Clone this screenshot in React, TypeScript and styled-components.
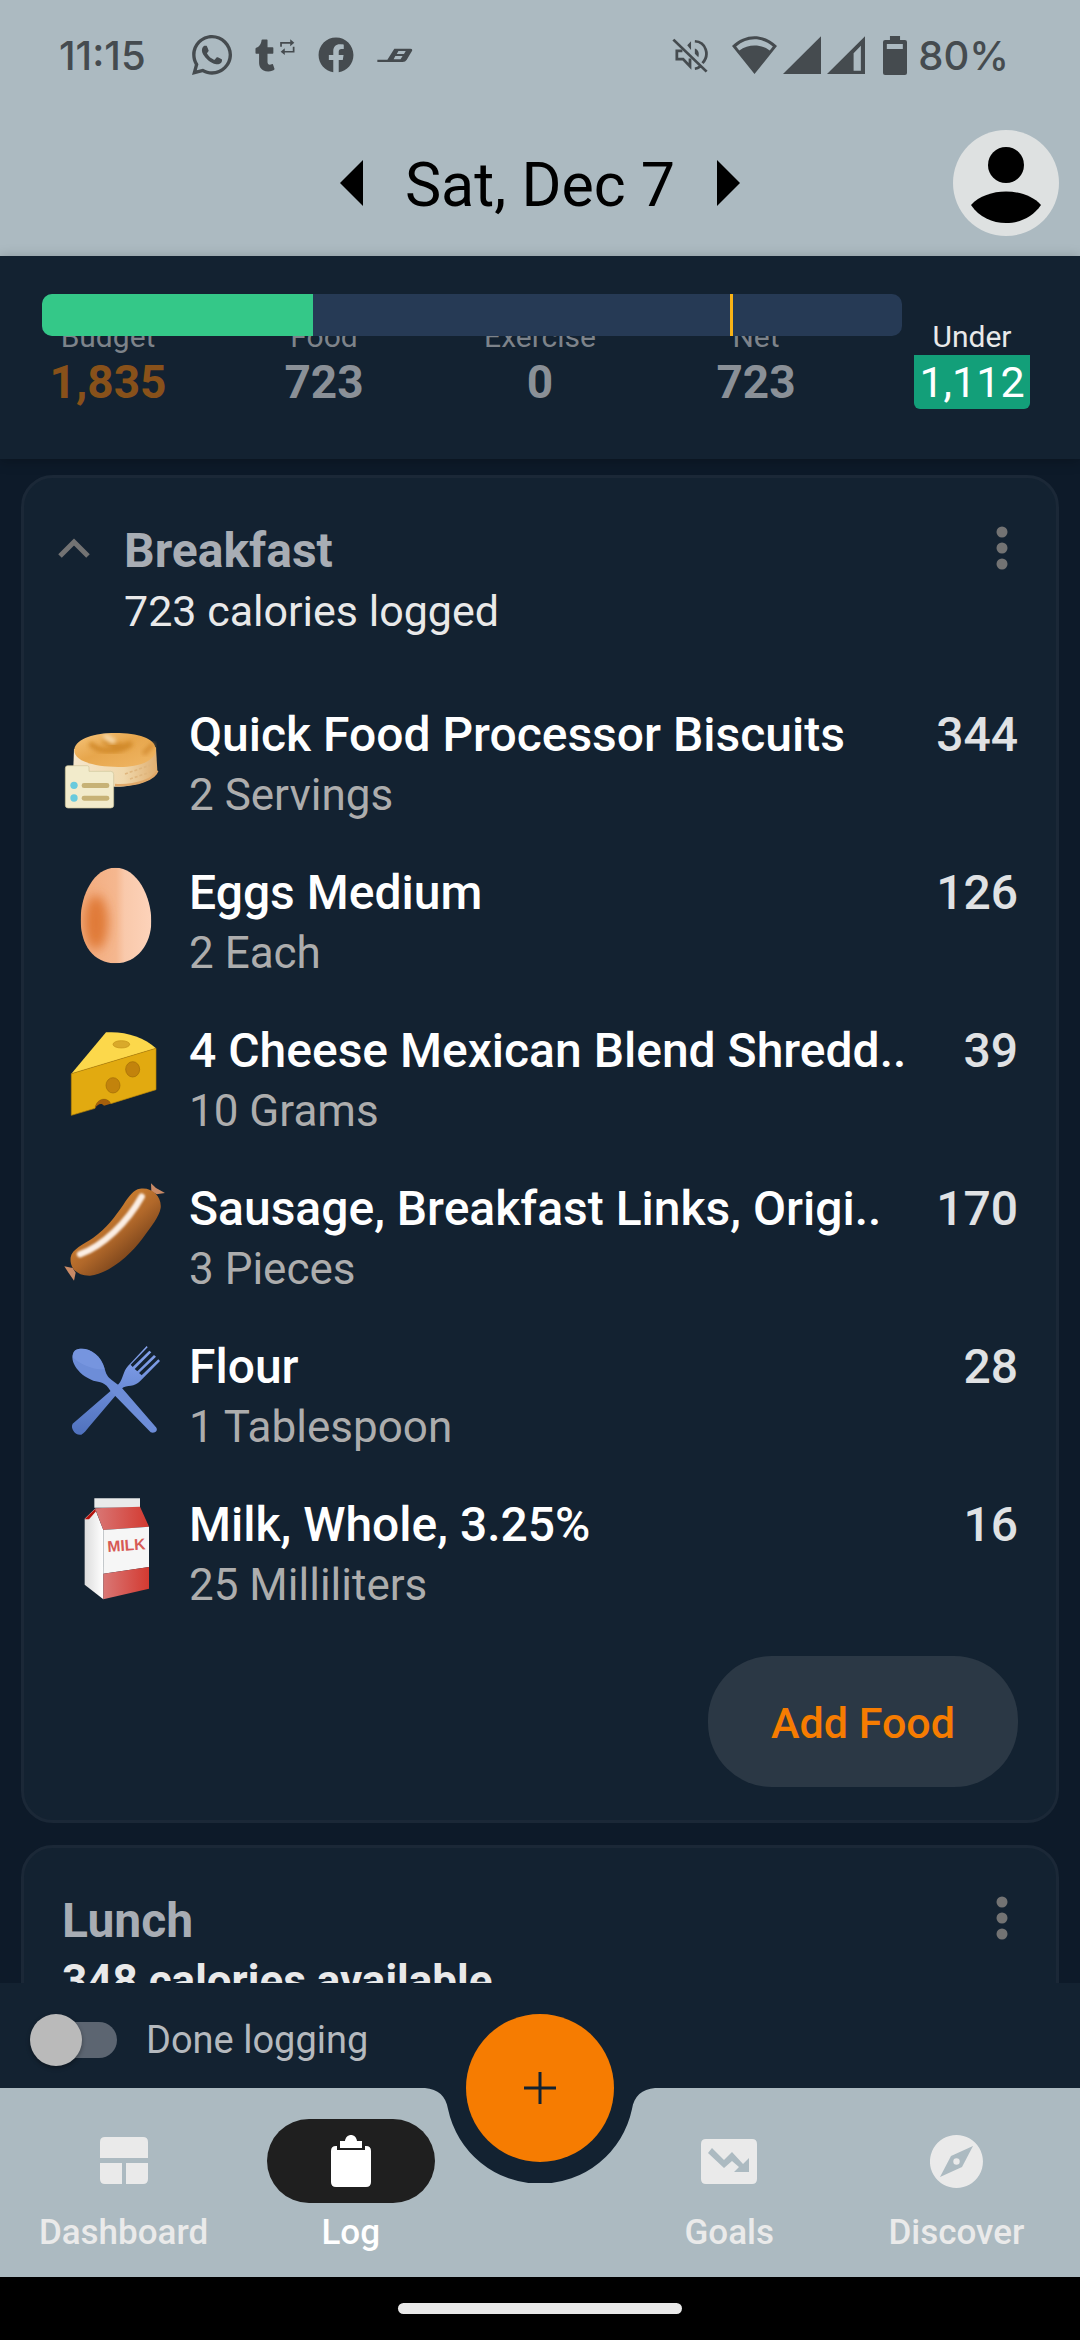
import React, { useState } from "react";
import styled, { createGlobalStyle } from "styled-components";
import { FaWhatsapp, FaTumblr, FaFacebook } from "react-icons/fa";

const color = {
  chrome: "#acbac1",
  page: "#0d1a29",
  panel: "#132231",
  line: "#1b2837",
  status: "#454b4f",
  accent: "#f67c01",
  white: "#ffffff",
  soft: "#e9e9e9",
  muted: "#adadad",
  title: "#a8adb4",
};

const GlobalStyle = createGlobalStyle`
  * { box-sizing: border-box; }
  body { margin: 0; background: ${color.page}; font-family: Roboto, "Liberation Sans", sans-serif; }
  button { border: 0; padding: 0; background: none; font: inherit; color: inherit; cursor: pointer; }
  h1, h2, p, ul, dl, dt, dd { margin: 0; padding: 0; font-weight: inherit; }
  svg { display: block; flex: none; }
`;

const Screen = styled.div`
  display: flex;
  flex-direction: column;
  height: 100vh;
  overflow: hidden;
`;

/* ---------- status bar ---------- */
const StatusBar = styled.div`
  display: flex;
  justify-content: space-between;
  align-items: center;
  height: 110px;
  padding: 0 71px 0 59px;
  background: ${color.chrome};
  color: ${color.status};
  font-family: Inter, Roboto, sans-serif;
  font-size: 40px;
  font-weight: 500;
  flex: none;
`;
const Cluster = styled.div<{ $gap: number }>`
  display: flex;
  align-items: center;
  gap: ${(p) => p.$gap}px;
`;
const Reblog = styled.div`
  display: flex;
  align-items: flex-start;
  gap: 5px;
`;

/* ---------- header ---------- */
const Header = styled.header`
  display: grid;
  grid-template-columns: 1fr auto 1fr;
  align-items: center;
  height: 146px;
  padding: 0 21px;
  background: ${color.chrome};
  color: #000;
  flex: none;
`;
const DatePicker = styled.div`
  grid-column: 2;
  display: flex;
  align-items: center;
  gap: 42px;
`;
const DateTitle = styled.h1`
  padding-top: 4px;
  font-size: 61px;
  line-height: 72px;
  font-weight: 400;
`;
const Avatar = styled.button`
  grid-column: 3;
  justify-self: end;
  width: 106px;
  height: 106px;
  border-radius: 50%;
  background: #dee1e1;
`;

/* ---------- summary ---------- */
const Summary = styled.section`
  position: relative;
  z-index: 1;
  padding: 63px 0 50px;
  background: ${color.panel};
  box-shadow: 0 2px 12px rgba(0, 0, 0, 0.25);
  flex: none;
`;
const Stats = styled.dl`
  display: grid;
  grid-template-columns: repeat(5, 1fr);
`;
const Stat = styled.div`
  display: flex;
  flex-direction: column;
  align-items: center;
`;
const StatLabel = styled.dt<{ $bright?: boolean }>`
  font-size: 30px;
  line-height: 36px;
  color: ${(p) => (p.$bright ? color.soft : "#7d838a")};
`;
const StatValue = styled.dd<{ $tone: string }>`
  font-size: 46px;
  line-height: 54px;
  font-weight: 700;
  color: ${(p) => p.$tone};
`;
const Remaining = styled.dd`
  padding: 0 5px;
  border-radius: 0 0 6px 6px;
  background: #139f79;
  color: ${color.white};
  font-size: 43px;
  line-height: 54px;
`;
const Meter = styled.div`
  position: absolute;
  top: 38px;
  left: 42px;
  right: 178px;
  height: 42px;
  border-radius: 10px;
  background: #263a55;
  overflow: hidden;
`;
const MeterFill = styled.div`
  height: 100%;
  background: #34c888;
`;
const MeterMark = styled.div`
  position: absolute;
  top: 0;
  width: 3px;
  height: 100%;
  background: #f9b316;
`;

/* ---------- meals ---------- */
const Meals = styled.main`
  flex: 1;
  min-height: 0;
  overflow: hidden;
  display: flex;
  flex-direction: column;
  gap: 22px;
  padding: 16px 21px 0;
  background: ${color.page};
`;
const Card = styled.section`
  flex: none;
  padding: 42px 38px 33px 36px;
  border: 3px solid ${color.line};
  border-radius: 32px;
  background: ${color.panel};
`;
const CardHeader = styled.div`
  display: flex;
  align-items: flex-start;
  padding-left: 2px;
`;
const IconButton = styled.button<{ $toggle?: boolean }>`
  display: flex;
  align-items: center;
  justify-content: center;
  width: 32px;
  height: 56px;
  margin: ${(p) => (p.$toggle ? "0 34px 0 -4px" : "0 0 0 auto")};
`;
const MealTitle = styled.h2`
  font-size: 48px;
  line-height: 62px;
  font-weight: 700;
  color: ${color.title};
`;
const MealNote = styled.p<{ $strong?: boolean }>`
  font-size: ${(p) => (p.$strong ? 44 : 43)}px;
  line-height: 58px;
  font-weight: ${(p) => (p.$strong ? 700 : 400)};
  color: ${color.soft};
`;
const FoodList = styled.ul`
  display: flex;
  flex-direction: column;
  gap: 38px;
  margin-top: 64px;
  list-style: none;
`;
const FoodRow = styled.li`
  display: flex;
  align-items: flex-start;
  gap: 21px;
`;
const FoodText = styled.div`
  flex: 1;
  min-width: 0;
`;
const FoodName = styled.p`
  font-size: 48px;
  line-height: 62px;
  font-weight: 500;
  color: ${color.white};
  white-space: nowrap;
`;
const FoodAmount = styled.p`
  font-size: 44px;
  line-height: 58px;
  color: ${color.muted};
`;
const FoodCalories = styled.span`
  font-size: 48px;
  line-height: 62px;
  font-weight: 500;
  color: #e0e2e4;
`;
const CardActions = styled.div`
  display: flex;
  justify-content: flex-end;
  margin-top: 42px;
`;
const AddFood = styled.button`
  min-width: 310px;
  height: 131px;
  padding: 3px 60px 0;
  border-radius: 64px;
  background: #2b3845;
  color: ${color.accent};
  font-size: 43px;
  font-weight: 500;
`;

/* ---------- footer ---------- */
const DoneBar = styled.label`
  display: flex;
  align-items: center;
  gap: 29px;
  height: 105px;
  padding: 8px 30px 0;
  background: ${color.panel};
  color: #b5b9be;
  font-size: 38px;
  flex: none;
`;
const Switch = styled.input`
  appearance: none;
  display: grid;
  align-items: center;
  width: 87px;
  height: 52px;
  margin: 0;
  &::before,
  &::after {
    content: "";
    grid-area: 1 / 1;
  }
  &::before {
    height: 36px;
    margin-left: 16px;
    border-radius: 18px;
    background: #5c6571;
  }
  &::after {
    width: 52px;
    height: 52px;
    border-radius: 50%;
    background: #bababa;
    box-shadow: 0 2px 4px rgba(0, 0, 0, 0.35);
  }
  &:checked::after {
    justify-self: end;
  }
`;
const Nav = styled.nav`
  position: relative;
  display: grid;
  grid-template-columns: 3fr 3fr 2fr 3fr 3fr;
  align-items: start;
  height: 189px;
  padding: 31px 10px 0;
  background: ${color.chrome};
  flex: none;
`;
const Cradle = styled.svg`
  position: absolute;
  top: 0;
  left: calc(50% - 120px);
`;
const Fab = styled.button`
  position: absolute;
  top: -74px;
  left: calc(50% - 74px);
  display: grid;
  place-items: center;
  width: 148px;
  height: 148px;
  border-radius: 50%;
  background: ${color.accent};
`;
const NavItem = styled.a<{ $active?: boolean; $after?: boolean }>`
  display: flex;
  flex-direction: column;
  align-items: center;
  gap: 10px;
  ${(p) => (p.$after ? "grid-column: 4;" : "")}
  color: ${(p) => (p.$active ? color.white : "#eaeaea")};
  font-size: 35px;
  line-height: 40px;
  font-weight: 500;
  text-decoration: none;
`;
const NavPill = styled.span<{ $active?: boolean }>`
  display: grid;
  place-items: center;
  width: 168px;
  height: 84px;
  border-radius: 42px;
  background: ${(p) => (p.$active ? "#1f1f1f" : "transparent")};
`;
const SystemBar = styled.div`
  display: flex;
  justify-content: center;
  height: 63px;
  padding-top: 26px;
  background: #000;
  flex: none;
`;
const HomeHandle = styled.div`
  width: 284px;
  height: 11px;
  border-radius: 6px;
  background: ${color.soft};
`;

/* ---------- drawings ---------- */
const Glyph = ({ w, h, box, children }: { w: number; h: number; box: string; children: React.ReactNode }) => (
  <svg width={w} height={h} viewBox={box} preserveAspectRatio="none" fill="currentColor" aria-hidden="true">
    {children}
  </svg>
);

const Dots = () => (
  <svg width="12" height="44" viewBox="0 0 12 44" fill="#737373" aria-hidden="true">
    <circle cx="6" cy="6" r="5.5" />
    <circle cx="6" cy="22" r="5.5" />
    <circle cx="6" cy="38" r="5.5" />
  </svg>
);

const Art = ({ y, children }: { y: number; children: React.ReactNode }) => (
  <svg width="108" height="108" viewBox={`60 ${y} 324 324`} aria-hidden="true">
    {children}
  </svg>
);

const BiscuitArt = () => (
  <Art y={15}>
    <defs>
      <linearGradient id="bTop" x1="0" y1="0" x2="1" y2="1">
        <stop offset="0" stopColor="#f6c57c" />
        <stop offset=".45" stopColor="#e7a64c" />
        <stop offset="1" stopColor="#f0b766" />
      </linearGradient>
      <linearGradient id="bSide" x1="0" y1="0" x2="1" y2="0">
        <stop offset="0" stopColor="#f5e6cb" />
        <stop offset=".6" stopColor="#f0d8ac" />
        <stop offset="1" stopColor="#dfae70" />
      </linearGradient>
      <filter id="bBlur" x="-30%" y="-30%" width="160%" height="160%">
        <feGaussianBlur stdDeviation="7" />
      </filter>
    </defs>
    <path d="M102 150 L100 205 C120 250 180 266 240 263 C300 258 345 240 352 215 L348 145 Z" fill="url(#bSide)" />
    <path d="M225 258 C290 262 345 240 352 215" fill="none" stroke="#e0a868" strokeWidth="7" />
    <path d="M255 225 L340 195 M270 240 L335 218" stroke="#dfb67e" strokeWidth="5" strokeDasharray="9 6" />
    <path d="M103 150 C110 118 165 102 225 102 C295 102 345 118 347 150 C349 186 295 205 235 204 C160 203 98 186 103 150 Z" fill="url(#bTop)" />
    <path d="M150 132 C170 160 245 165 275 132 C250 150 200 135 190 122" fill="none" stroke="#d18a2c" strokeWidth="16" filter="url(#bBlur)" />
    <path d="M310 165 L340 135" stroke="#d58f36" strokeWidth="14" filter="url(#bBlur)" />
    <path d="M192 110 L225 130" stroke="#f9ddb0" strokeWidth="16" filter="url(#bBlur)" />
    <path d="M83 200 H142 Q147 200 147 206 V217 H212 Q221 217 221 226 V319 Q221 327 212 327 H84 Q76 327 76 319 V208 Q76 200 83 200 Z" fill="#f2ebcb" stroke="#cfc49a" strokeWidth="2" />
    <circle cx="102" cy="259" r="11" fill="#69cadd" />
    <circle cx="102" cy="297" r="11" fill="#69cadd" />
    <rect x="125" y="252" width="83" height="15" rx="7" fill="#c7b276" />
    <rect x="125" y="290" width="83" height="15" rx="7" fill="#c7b276" />
  </Art>
);

const EggArt = () => (
  <Art y={487}>
    <defs>
      <linearGradient id="egg" x1="0" y1="0" x2="1" y2="0">
        <stop offset="0" stopColor="#f2ab7d" />
        <stop offset=".5" stopColor="#f5b78f" />
        <stop offset=".62" stopColor="#f9c9ab" />
        <stop offset="1" stopColor="#fdd3ba" />
      </linearGradient>
      <filter id="eggBlur" x="-60%" y="-40%" width="220%" height="180%">
        <feGaussianBlur stdDeviation="16" />
      </filter>
      <clipPath id="eggShape">
        <path d="M226 504 C292 504 334 590 334 665 C334 735 290 791 228 791 C160 791 122 735 122 660 C122 585 162 504 226 504 Z" />
      </clipPath>
    </defs>
    <g clipPath="url(#eggShape)">
      <rect x="120" y="500" width="216" height="294" fill="url(#egg)" />
      <ellipse cx="168" cy="668" rx="36" ry="82" fill="#e07a38" filter="url(#eggBlur)" />
    </g>
  </Art>
);

const CheeseArt = () => (
  <Art y={959}>
    <path d="M198 996 C255 992 312 1010 348 1044 L94 1120 Z" fill="#fcd84b" />
    <path d="M94 1120 L348 1044 V1168 L212 1210 C205 1190 170 1190 165 1224 L94 1245 Z" fill="#e2aa10" stroke="#b98508" strokeWidth="2" />
    <path d="M165 1224 C170 1190 205 1190 212 1210 L192 1216 C184 1206 172 1212 165 1224 Z" fill="#a65f0b" />
    <ellipse cx="244" cy="1032" rx="25" ry="11" fill="#d9a92a" stroke="#c39016" strokeWidth="2" />
    <ellipse cx="278" cy="1107" rx="21" ry="23" fill="#c2830c" stroke="#9f6a08" strokeWidth="2" />
    <ellipse cx="219" cy="1155" rx="21" ry="23" fill="#c2830c" stroke="#9f6a08" strokeWidth="2" />
  </Art>
);

const SausageArt = () => (
  <Art y={112}>
    <defs>
      <linearGradient id="saus" x1=".3" y1=".3" x2=".7" y2=".75">
        <stop offset="0" stopColor="#cd8030" />
        <stop offset=".5" stopColor="#b1682a" />
        <stop offset="1" stopColor="#7d461c" />
      </linearGradient>
      <filter id="sBlur" x="-20%" y="-20%" width="140%" height="140%">
        <feGaussianBlur stdDeviation="3" />
      </filter>
    </defs>
    <path d="M333 128 L348 142 L375 157 L350 161 L334 152 Z" fill="#c98a66" />
    <path d="M73 377 L98 382 L107 396 L102 420 L86 397 Z" fill="#c98a66" />
    <path d="M300 144 C336 138 366 168 362 202 C358 228 335 255 308 293 C270 345 205 400 150 405 C110 406 88 380 92 350 C95 325 130 312 160 291 C200 262 225 228 250 192 C267 166 280 147 300 144 Z" fill="url(#saus)" />
    <path d="M120 341 C190 315 262 245 305 168" fill="none" stroke="#fbeee4" strokeWidth="19" strokeLinecap="round" filter="url(#sBlur)" />
  </Art>
);

const CutleryArt = () => (
  <Art y={584}>
    <defs>
      <linearGradient id="cut" x1="0" y1="0" x2="0" y2="1">
        <stop offset="0" stopColor="#86a4ee" />
        <stop offset="1" stopColor="#4f71bd" />
      </linearGradient>
    </defs>
    <path d="M320 614 L264 674 C248 692 250 712 236 728 L98 847 C90 860 106 884 124 880 C132 876 140 866 146 858 L244 742 C262 730 284 738 300 720 L360 659 L355 654 L305 702 L297 695 L348 646 L342 641 L292 690 L284 683 L334 633 L328 628 L278 677 L272 670 L323 618 Z" fill="url(#cut)" />
    <path d="M106 627 C135 612 182 635 194 682 C200 705 206 708 220 720 L244 738 L348 858 C356 868 344 878 332 873 L212 750 C196 720 180 724 160 718 C110 700 82 650 106 627 Z" fill="#6d8dd8" />
    <path d="M106 627 C135 612 182 635 194 682 C170 690 120 670 98 648 C98 638 100 630 106 627 Z" fill="#7a99e2" opacity=".7" />
  </Art>
);

const MilkArt = () => (
  <Art y={1056}>
    <defs>
      <linearGradient id="mRed" x1="0" y1="0" x2="1" y2="0">
        <stop offset="0" stopColor="#d97775" />
        <stop offset="1" stopColor="#d33a31" />
      </linearGradient>
      <linearGradient id="mSide" x1="0" y1="0" x2="1" y2="0">
        <stop offset="0" stopColor="#dcdcdc" />
        <stop offset="1" stopColor="#ffffff" />
      </linearGradient>
    </defs>
    <path d="M163 1069 H300 V1097 H163 Z" fill="#e9eaea" />
    <path d="M134 1130 L165 1100 L190 1164 V1372 L134 1328 Z" fill="url(#mSide)" />
    <path d="M134 1132 L165 1101 L168 1108 L147 1132 Z" fill="#b3120c" />
    <path d="M165 1099 L300 1094 L327 1154 L190 1164 Z" fill="url(#mRed)" />
    <path d="M190 1164 L327 1154 V1275 L190 1295 Z" fill="#f6f6f6" />
    <path d="M190 1295 L327 1275 V1340 L190 1372 Z" fill="url(#mRed)" />
    <text x="203" y="1230" fontFamily="Liberation Sans, sans-serif" fontWeight="700" fontSize="47" fill="#d65a55" transform="rotate(-4 203 1230)">
      MILK
    </text>
  </Art>
);

const foods = [
  { name: "Quick Food Processor Biscuits", amount: "2 Servings", calories: 344, Picture: BiscuitArt },
  { name: "Eggs Medium", amount: "2 Each", calories: 126, Picture: EggArt },
  { name: "4 Cheese Mexican Blend Shredd..", amount: "10 Grams", calories: 39, Picture: CheeseArt },
  { name: "Sausage, Breakfast Links, Origi..", amount: "3 Pieces", calories: 170, Picture: SausageArt },
  { name: "Flour", amount: "1 Tablespoon", calories: 28, Picture: CutleryArt },
  { name: "Milk, Whole, 3.25%", amount: "25 Milliliters", calories: 16, Picture: MilkArt },
];

const budget = 1835;
const eaten = 723;
const scale = budget * 1.25;

const stats = [
  { label: "Budget", value: budget.toLocaleString("en-US"), tone: "#88511a" },
  { label: "Food", value: "723", tone: "#8a9097" },
  { label: "Exercise", value: "0", tone: "#8a9097" },
  { label: "Net", value: "723", tone: "#8a9097" },
];

export default function App() {
  const [done, setDone] = useState(false);
  return (
    <>
      <GlobalStyle />
      <Screen>
        <StatusBar>
          <Cluster $gap={46}>
            <span>11:15</span>
            <Cluster $gap={23}>
              <FaWhatsapp style={{ width: 40, height: 46 }} />
              <Reblog>
                <FaTumblr style={{ width: 20, height: 33 }} />
                <Glyph w={15} h={16} box="810 112 44 50">
                  <path d="M813 136 V124 H842 M850 136 V152 H820" fill="none" stroke="currentColor" strokeWidth="5" />
                  <path d="M840 113 L852 124 L840 135 Z M824 141 L812 152 L824 162 Z" />
                </Glyph>
              </Reblog>
              <FaFacebook style={{ width: 36, height: 36 }} />
              <Glyph w={36} h={16} box="1090 142 104 48">
                <path
                  fillRule="evenodd"
                  d="M1091 180 H1120 L1140 147 H1186 Q1194 147 1191 154 L1184 166 L1176 180 Q1172 187 1164 187 H1091 Z M1152 154 L1147 163 H1168 L1173 154 Z M1143 169 L1138 179 H1158 L1164 169 Z"
                />
              </Glyph>
            </Cluster>
          </Cluster>
          <Cluster $gap={18}>
            <Cluster $gap={24}>
              <Glyph w={36} h={35} box="388 114 104 106">
                <g fill="none" stroke="currentColor" strokeWidth="8">
                  <path d="M392 119 L488 216" />
                  <path d="M440 176 L440 200 L420 178 H402 V153 H418" />
                  <path d="M454 124 C486 126 498 165 476 190" />
                  <path d="M454 207 C462 206 466 203 470 200" />
                </g>
                <path d="M432 136 L443 124 V150 Z M454 146 C464 150 468 160 464 172 L454 162 Z" />
              </Glyph>
              <Cluster $gap={6}>
                <Glyph w={45} h={38} box="562 107 130 113">
                  <path
                    fillRule="evenodd"
                    d="M562 137 C600 98 654 98 692 137 L627 220 Z M574 138 L583 150 C610 130 644 130 671 150 L680 138 C648 110 606 110 574 138 Z"
                  />
                </Glyph>
                <Glyph w={38} h={38} box="704 107 109 113">
                  <path d="M813 108 V220 H704 Z" />
                </Glyph>
                <Glyph w={38} h={38} box="834 107 110 113">
                  <path fillRule="evenodd" d="M944 108 V220 H834 Z M932 136 L911 158 V210 H932 Z" />
                </Glyph>
              </Cluster>
            </Cluster>
            <Cluster $gap={11}>
              <Glyph w={24} h={39} box="999 105 69 116">
                <path
                  fillRule="evenodd"
                  d="M1019 105 H1048 V117 H1062 Q1068 117 1068 123 V215 Q1068 221 1062 221 H1005 Q999 221 999 215 V123 Q999 117 1005 117 H1019 Z M1010 129 V144 H1056 V129 Z"
                />
              </Glyph>
              <span>80%</span>
            </Cluster>
          </Cluster>
        </StatusBar>

        <Header>
          <DatePicker>
            <button aria-label="Previous day">
              <svg width="23" height="46" viewBox="0 0 23 46">
                <path d="M23 0 V46 L0 23 Z" />
              </svg>
            </button>
            <DateTitle>Sat, Dec 7</DateTitle>
            <button aria-label="Next day">
              <svg width="23" height="46" viewBox="0 0 23 46">
                <path d="M0 0 V46 L23 23 Z" />
              </svg>
            </button>
          </DatePicker>
          <Avatar aria-label="Account">
            <svg width="106" height="106" viewBox="0 0 106 106">
              <circle cx="53" cy="35" r="18" />
              <path d="M18 75 C34 57 72 57 88 75 C72 99 34 99 18 75 Z" />
            </svg>
          </Avatar>
        </Header>

        <Summary>
          <Stats>
            {stats.map((s) => (
              <Stat key={s.label}>
                <StatLabel>{s.label}</StatLabel>
                <StatValue $tone={s.tone}>{s.value}</StatValue>
              </Stat>
            ))}
            <Stat>
              <StatLabel $bright>Under</StatLabel>
              <Remaining>1,112</Remaining>
            </Stat>
          </Stats>
          <Meter>
            <MeterFill style={{ width: `${(eaten / scale) * 100}%` }} />
            <MeterMark style={{ left: `${(budget / scale) * 100}%` }} />
          </Meter>
        </Summary>

        <Meals>
          <Card>
            <CardHeader>
              <IconButton $toggle aria-label="Collapse breakfast">
                <svg width="32" height="20" viewBox="0 0 32 20" fill="none" stroke="#737373" strokeWidth="5">
                  <path d="M2 18 L16 4 L30 18" />
                </svg>
              </IconButton>
              <div>
                <MealTitle>Breakfast</MealTitle>
                <MealNote>723 calories logged</MealNote>
              </div>
              <IconButton aria-label="Breakfast options">
                <Dots />
              </IconButton>
            </CardHeader>
            <FoodList>
              {foods.map(({ name, amount, calories, Picture }) => (
                <FoodRow key={name}>
                  <Picture />
                  <FoodText>
                    <FoodName>{name}</FoodName>
                    <FoodAmount>{amount}</FoodAmount>
                  </FoodText>
                  <FoodCalories>{calories}</FoodCalories>
                </FoodRow>
              ))}
            </FoodList>
            <CardActions>
              <AddFood>Add Food</AddFood>
            </CardActions>
          </Card>
          <Card>
            <CardHeader>
              <div>
                <MealTitle>Lunch</MealTitle>
                <MealNote $strong>348 calories available</MealNote>
              </div>
              <IconButton aria-label="Lunch options">
                <Dots />
              </IconButton>
            </CardHeader>
          </Card>
        </Meals>

        <DoneBar>
          <Switch type="checkbox" checked={done} onChange={(e) => setDone(e.target.checked)} />
          Done logging
        </DoneBar>

        <Nav>
          <Cradle width="240" height="95" viewBox="0 0 240 95" aria-hidden="true">
            <path d="M5 0 C18 1 26 8 28 21 A94 94 0 0 0 212 21 C214 8 222 1 235 0 Z" fill={color.panel} />
          </Cradle>
          <NavItem href="#dashboard">
            <NavPill>
              <svg width="48" height="48" viewBox="0 0 48 48" fill="currentColor">
                <path d="M5 0 H43 Q48 0 48 5 V21 H0 V5 Q0 0 5 0 Z M0 26 H22 V47 H5 Q0 47 0 42 Z M26 26 H48 V42 Q48 47 43 47 H26 Z" />
              </svg>
            </NavPill>
            Dashboard
          </NavItem>
          <NavItem href="#log" $active>
            <NavPill $active>
              <svg width="40" height="52" viewBox="0 0 40 52" fill="currentColor">
                <path d="M5 11 H6 V15 H34 V11 H35 Q40 11 40 16 V47 Q40 52 35 52 H5 Q0 52 0 47 V16 Q0 11 5 11 Z" />
                <path d="M9 6 H14 C15 -2 25 -2 26 6 H31 V13 H9 Z" />
              </svg>
            </NavPill>
            Log
          </NavItem>
          <NavItem href="#goals" $after>
            <NavPill>
              <svg width="56" height="45" viewBox="0 0 56 45" fill="currentColor">
                <path
                  fillRule="evenodd"
                  d="M5 0 H51 Q56 0 56 5 V40 Q56 45 51 45 H5 Q0 45 0 40 V5 Q0 0 5 0 Z M11 9 L7 14 L23 29 L31 22 L38 28 L33 33 H48 V19 L42 25 L31 13 L23 21 Z"
                />
              </svg>
            </NavPill>
            Goals
          </NavItem>
          <NavItem href="#discover">
            <NavPill>
              <svg width="53" height="53" viewBox="0 0 53 53" fill="currentColor">
                <path fillRule="evenodd" d="M26.5 0 A26.5 26.5 0 1 1 26.4 0 Z M43 11 L21 21 L10 42 L32 32 Z" />
                <circle cx="26.5" cy="26.5" r="3.2" />
              </svg>
            </NavPill>
            Discover
          </NavItem>
          <Fab aria-label="Add">
            <svg width="32" height="32" viewBox="0 0 32 32" stroke={color.panel} strokeWidth="3">
              <path d="M16 0 V32 M0 16 H32" />
            </svg>
          </Fab>
        </Nav>
        <SystemBar>
          <HomeHandle />
        </SystemBar>
      </Screen>
    </>
  );
}
